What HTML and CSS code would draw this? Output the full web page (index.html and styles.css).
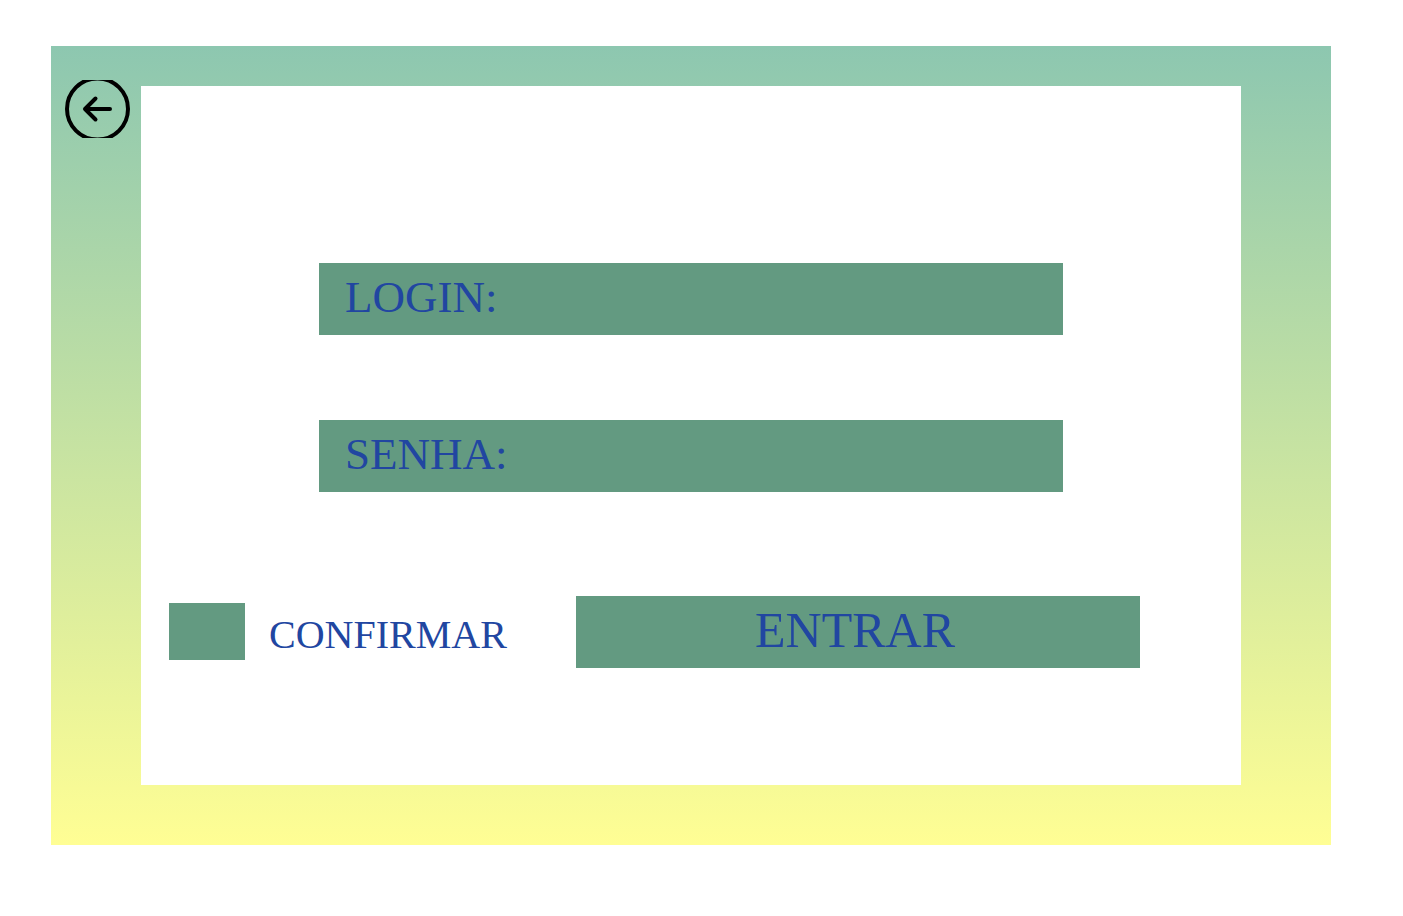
FILE: index.html
```html
<!DOCTYPE html>
<html lang="pt-BR">
<head>
<meta charset="utf-8">
<meta name="viewport" content="width=device-width, initial-scale=1">
<title>Login</title>
<link rel="stylesheet" href="styles.css">
</head>
<body>
<main class="frame">
  <a class="back" href="#" aria-label="Voltar">
    <svg class="back-icon" viewBox="0 0 65 58" fill="none" stroke="#000" stroke-width="4">
      <circle cx="32.5" cy="29" r="30.5"/>
      <path d="M45 29H20M30.500 18.500L20 29l10.500 10.500" stroke-linecap="round" stroke-linejoin="round"/>
    </svg>
  </a>
  <form class="card">
    <div class="fields">
      <div class="field">
        <label for="login">LOGIN:</label>
        <input id="login" type="text" autocomplete="username">
      </div>
      <div class="field">
        <label for="senha">SENHA:</label>
        <input id="senha" type="password" autocomplete="current-password">
      </div>
    </div>
    <div class="actions">
      <div class="confirm">
        <input id="confirmar" type="checkbox">
        <label for="confirmar">CONFIRMAR</label>
      </div>
      <button class="enter" type="button">ENTRAR</button>
    </div>
  </form>
</main>
</body>
</html>
```

FILE: styles.css
```css
* {
  box-sizing: border-box;
}

body {
  margin: 0;
  padding: 46px 72px 71px 51px;
  background: #fff;
  color: #2146a1;
  font-family: "Liberation Serif", "Times New Roman", serif;
}

.frame {
  display: flex;
  align-items: flex-start;
  padding: 40px 90px 60px 0;
  background: linear-gradient(#8dc7b0, #fffe94);
}

.back {
  flex: 0 0 90px;
  padding-left: 14px;
  margin-top: -6px;
}

.back-icon {
  display: block;
  width: 65px;
  height: 58px;
}

.card {
  flex: 1;
  min-width: 0;
  padding: 177px 0 117px;
  background: #fff;
}

.fields {
  display: grid;
  grid-template-columns: minmax(0, 1fr);
  gap: 85px;
  padding: 0 178px;
}

.field {
  display: flex;
  align-items: center;
  gap: 16px;
  height: 72px;
  padding: 0 26px 4px;
  background: #639a81;
  font-size: 45px;
}

.field input {
  flex: 1;
  min-width: 0;
  padding: 0;
  border: 0;
  outline: 0;
  background: transparent;
  color: inherit;
  font: inherit;
}

.actions {
  display: flex;
  align-items: center;
  justify-content: space-between;
  gap: 24px;
  margin-top: 104px;
  padding: 0 101px 0 28px;
}

.confirm {
  display: flex;
  align-items: center;
  gap: 24px;
  padding-bottom: 2px;
  font-size: 40px;
}

.confirm input {
  appearance: none;
  width: 76px;
  height: 57px;
  margin: 0;
  background: #639a81;
}

.confirm input:checked {
  background: #2146a1;
}

.confirm label {
  padding-top: 6px;
}

.enter {
  flex: 0 1 564px;
  height: 72px;
  padding: 0 6px 4px 0;
  border: 0;
  background: #639a81;
  color: inherit;
  font-family: inherit;
  font-size: 50px;
  cursor: pointer;
}
```
